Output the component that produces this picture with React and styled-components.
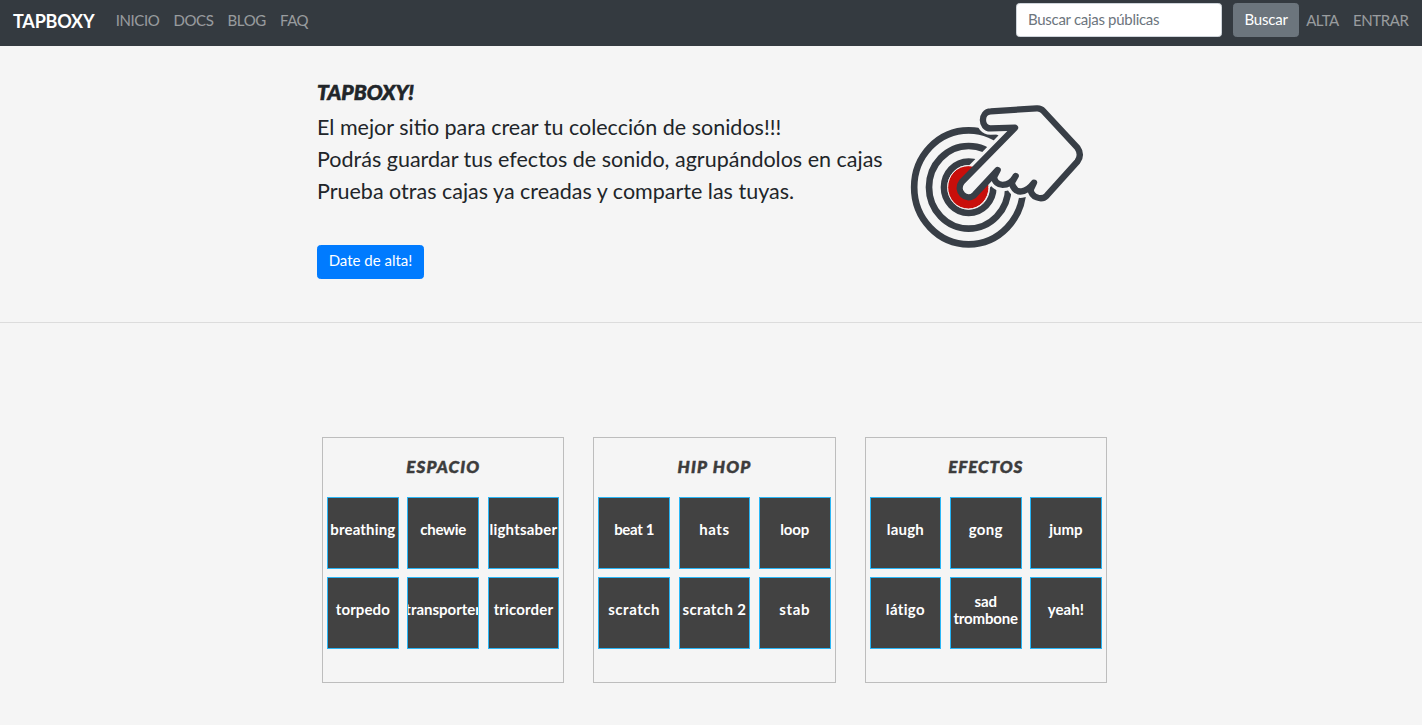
import React from "react";
import styled, { createGlobalStyle } from "styled-components";

const GlobalStyle = createGlobalStyle`
  html { font-size: 14.22px; }
  *, *::before, *::after { box-sizing: border-box; }
  body {
    margin: 0;
    background: #f5f5f5;
    color: #212529;
    font-family: Lato, "Liberation Sans", sans-serif;
    font-size: 1rem;
    line-height: 1.5;
    overflow: hidden;
  }
`;

const Navbar = styled.nav`
  display: flex;
  align-items: flex-start;
  height: 46px;
  padding: 3px 6.5px 0 13px;
  background: #343a40;
`;

const Brand = styled.a`
  width: 82px;
  margin-right: 13.7px;
  color: #fff;
  font-size: 18px;
  font-weight: 700;
  line-height: 37px;
  letter-spacing: -0.2px;
  white-space: nowrap;
`;

const NavLink = styled.a`
  padding: 7px 7.11px;
  color: rgba(255, 255, 255, 0.5);
  font-size: 15px;
  line-height: 21.33px;
  letter-spacing: -0.43px;
  white-space: nowrap;
`;

const Search = styled.form`
  display: flex;
  gap: 11px;
  margin-left: auto;
`;

const SearchInput = styled.input`
  width: 206px;
  height: 34px;
  padding: 4px 11px 6px;
  border: 1px solid #ced4da;
  border-radius: 3.5px;
  background: #fff;
  font: inherit;
  font-size: 15px;
  letter-spacing: -0.3px;
  &::placeholder { color: #6c757d; opacity: 1; }
`;

const Button = styled.button`
  width: ${(p) => p.$width}px;
  height: 34px;
  padding: 0 0 ${(p) => p.$lift}px;
  border: 1px solid ${(p) => p.$color};
  border-radius: 3.5px;
  background: ${(p) => p.$color};
  color: #fff;
  font: inherit;
  font-size: 15px;
  letter-spacing: ${(p) => p.$track || 0}px;
  white-space: nowrap;
`;

const Hero = styled.header`
  display: flex;
  height: 277px;
  padding: 32px 0 0 317px;
  border-bottom: 1px solid #dcdcdc;
`;

const Intro = styled.div`
  width: 583px;
`;

const HeroTitle = styled.h1`
  margin: 0;
  height: 33px;
  font-size: 21px;
  font-weight: 900;
  font-style: italic;
  line-height: 28px;
  letter-spacing: 0;
  -webkit-text-stroke: 0.6px currentColor;
`;

const Lead = styled.p`
  margin: 0 0 38px;
  font-size: 21.5px;
  line-height: 32px;
  white-space: nowrap;
`;

const Logo = styled.svg`
  width: 200px;
  height: 165px;
  margin-top: 17px;
`;

const Boxes = styled.main`
  display: flex;
  gap: 28.9px;
  padding: 114px 0 0 322px;
`;

const Box = styled.section`
  width: 242.4px;
  height: 246px;
  padding: 0 4px;
  border: 1px solid #bdbdbd;
`;

const BoxTitle = styled.h2`
  margin: 0;
  padding-top: 16px;
  height: 59px;
  color: #3c3c3c;
  font-size: 17px;
  font-weight: 900;
  font-style: italic;
  line-height: 26px;
  letter-spacing: ${(p) => p.$track}px;
  text-align: center;
  -webkit-text-stroke: 0.5px currentColor;
`;

const Pads = styled.div`
  display: grid;
  grid-template-columns: repeat(3, 71.7px);
  grid-auto-rows: 72px;
  gap: 8px 8.6px;
`;

const Pad = styled.div`
  display: flex;
  align-items: center;
  justify-content: center;
  padding-bottom: 7px;
  overflow: hidden;
  border: 1px solid #29b6f6;
  background: #424242;
  color: #fff;
  font-size: 15px;
  font-weight: 700;
  line-height: 17px;
  text-align: center;
`;

const PadLabel = styled.span`
  flex: none;
  letter-spacing: ${(p) => p.$track}px;
  white-space: pre;
`;

const boxes = [
  { title: "ESPACIO", track: 1.1, pads: [["breathing", 0.15], ["chewie", -0.3], ["lightsaber", 0.2], ["torpedo", 0.1], ["transporter", 0], ["tricorder", 0.15]] },
  { title: "HIP HOP", track: 1.2, pads: [["beat 1", -0.35], ["hats", 0.5], ["loop", -0.2], ["scratch", 0.55], ["scratch 2", 0.4], ["stab", 0.7]] },
  { title: "EFECTOS", track: 0.95, pads: [["laugh", 0.2], ["gong", 0.3], ["jump", 0], ["látigo", 0.35], ["sad\ntrombone", -0.15], ["yeah!", 0.1]] },
];

const hand =
  "M345 98 L272 100 C241 101 241 50 272 49 L410 40 Q422 39 430 48 L532 158 Q547 179 532 200 L440 302 C424 318 394 306 392 284 L402 263 C380 292 347 304 335 264 L347 243 C326 279 286 277 282 246 L293 225 L224 299 C200 322 164 290 186 260 Z";

function TapLogo() {
  return (
    <Logo viewBox="0 0 600 495" fill="none" strokeLinejoin="round" strokeLinecap="round">
      <g stroke="#383e46" strokeWidth="20">
        <ellipse cx="206" cy="277" rx="163.5" ry="171" />
        <ellipse cx="206" cy="277" rx="119" ry="124" />
        <ellipse cx="206" cy="277" rx="74" ry="77" />
      </g>
      <path d={hand} stroke="#f5f5f5" strokeWidth="38" />
      <ellipse cx="205" cy="277" rx="62" ry="65" fill="#c90f0b" stroke="#f5f5f5" strokeWidth="3" />
      <path d={hand} fill="#f5f5f5" stroke="#383e46" strokeWidth="19" />
    </Logo>
  );
}

export default function App() {
  return (
    <>
      <GlobalStyle />
      <Navbar>
        <Brand>TAPBOXY</Brand>
        <NavLink>INICIO</NavLink>
        <NavLink>DOCS</NavLink>
        <NavLink>BLOG</NavLink>
        <NavLink>FAQ</NavLink>
        <Search>
          <SearchInput placeholder="Buscar cajas públicas" />
          <Button type="button" $color="#6c757d" $width={66} $lift={1} $track={-0.2}>Buscar</Button>
        </Search>
        <NavLink>ALTA</NavLink>
        <NavLink>ENTRAR</NavLink>
      </Navbar>
      <Hero>
        <Intro>
          <HeroTitle>TAPBOXY!</HeroTitle>
          <Lead>
            El mejor sitio para crear tu colección de sonidos!!!
            <br />
            Podrás guardar tus efectos de sonido, agrupándolos en cajas
            <br />
            Prueba otras cajas ya creadas y comparte las tuyas.
          </Lead>
          <Button $color="#007bff" $width={107} $lift={3}>Date de alta!</Button>
        </Intro>
        <TapLogo />
      </Hero>
      <Boxes>
        {boxes.map((box) => (
          <Box key={box.title}>
            <BoxTitle $track={box.track}>{box.title}</BoxTitle>
            <Pads>
              {box.pads.map(([label, track]) => (
                <Pad key={label}>
                  <PadLabel $track={track}>{label}</PadLabel>
                </Pad>
              ))}
            </Pads>
          </Box>
        ))}
      </Boxes>
    </>
  );
}
